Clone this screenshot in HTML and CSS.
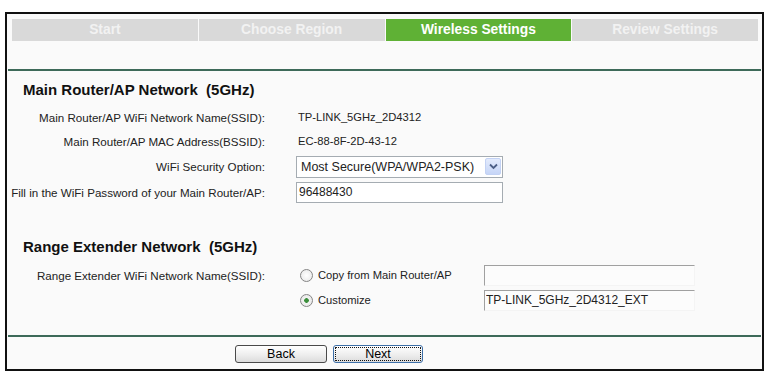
FILE: index.html
```html
<!DOCTYPE html>
<html lang="en">
<head>
    <meta charset="UTF-8">
    <title>Quick Setup - Wireless Settings</title>
    <link rel="stylesheet" href="styles.css">
</head>
<body>
    <div class="frame">
        <div class="tabs">
            <div class="tab">Start</div>
            <div class="tab">Choose Region</div>
            <div class="tab active">Wireless Settings</div>
            <div class="tab">Review Settings</div>
        </div>
        <div class="rule rule-top"></div>

        <h2 class="section-title">Main Router/AP Network&nbsp; (5GHz)</h2>
        <div class="row">
            <span class="label">Main Router/AP WiFi Network Name(SSID):</span>
            <span class="value">TP-LINK_5GHz_2D4312</span>
        </div>
        <div class="row">
            <span class="label">Main Router/AP MAC Address(BSSID):</span>
            <span class="value">EC-88-8F-2D-43-12</span>
        </div>
        <div class="row row-select">
            <span class="label">WiFi Security Option:</span>
            <div class="select">
                <span>Most Secure(WPA/WPA2-PSK)</span>
                <span class="select-arrow">
                    <svg width="9" height="7" viewBox="0 0 9 7"><path d="M1 1.5 L4.5 5 L8 1.5" fill="none" stroke="#4c5f86" stroke-width="1.8"/></svg>
                </span>
            </div>
        </div>
        <div class="row">
            <label class="label" for="password">Fill in the WiFi Password of your Main Router/AP:</label>
            <input class="text-input" type="text" id="password" value="96488430">
        </div>

        <h2 class="section-title section-second">Range Extender Network&nbsp; (5GHz)</h2>
        <div class="row row-ext">
            <span class="label">Range Extender WiFi Network Name(SSID):</span>
            <div class="choice">
                <label class="radio-label"><input type="radio" name="ssid" class="radio"> Copy from Main Router/AP</label>
                <input class="text-input inset" type="text" value="">
            </div>
        </div>
        <div class="row">
            <span class="label"></span>
            <div class="choice">
                <label class="radio-label"><input type="radio" name="ssid" class="radio" checked> Customize</label>
                <input class="text-input inset" type="text" value="TP-LINK_5GHz_2D4312_EXT">
            </div>
        </div>

        <div class="rule rule-bottom"></div>
        <div class="buttons">
            <button class="btn btn-back">Back</button>
            <button class="btn btn-next">Next</button>
        </div>
    </div>
</body>
</html>
```

FILE: styles.css
```css
body {
    margin: 0;
    background-color: #fff;
    font-family: "Liberation Sans", Arial, sans-serif;
    color: #222;
}
.frame {
    margin: 12px 0 0 5px;
    width: 755px;
    border: 2px solid #111;
    background-color: #fafafa;
}
.tabs {
    display: grid;
    grid-template-columns: repeat(4, 1fr);
    gap: 1px;
    padding: 5px 4px 0 5px;
}
.tab {
    height: 22px;
    line-height: 22px;
    text-align: center;
    background-color: #d9d9d9;
    color: #f2f2f2;
    font-weight: bold;
    font-size: 13.8px;
}
.tab.active {
    background-color: #5fb135;
    color: #fff;
}
.rule {
    height: 2px;
    margin: 0 1px;
    background-color: #3d6a59;
}
.rule-top {
    margin-top: 28px;
}
.rule-bottom {
    margin-top: 23px;
}
.section-title {
    margin: 9px 0 5px 16px;
    font-size: 15px;
    line-height: 20px;
    font-weight: bold;
    color: #111;
}
.section-second {
    margin-top: 33px;
}
.row {
    display: grid;
    grid-template-columns: 258px 1fr;
    column-gap: 31px;
    align-items: center;
    height: 24px;
    font-size: 11.6px;
}
.row-select {
    height: 27px;
}
.row-ext {
    height: 26px;
}
.label {
    text-align: right;
}
.value {
    padding-left: 2px;
    font-size: 11.2px;
}
.select {
    box-sizing: border-box;
    width: 207px;
    height: 22px;
    display: flex;
    align-items: center;
    justify-content: space-between;
    padding: 0 1px 0 4px;
    border: 1px solid #a5acb2;
    background-color: #fff;
    font-size: 12.5px;
    color: #222;
}
.select-arrow {
    width: 16px;
    height: 17px;
    display: flex;
    align-items: center;
    justify-content: center;
    box-sizing: border-box;
    border: 1px solid #c3d2f4;
    border-radius: 2px;
    background: linear-gradient(#e3ebfc, #c6d5f7);
}
.text-input {
    box-sizing: border-box;
    width: 207px;
    height: 21px;
    padding: 0 2px;
    border: 1px solid #a5acb2;
    background-color: #fff;
    font-family: "Liberation Sans", Arial, sans-serif;
    font-size: 12px;
    color: #222;
    outline: none;
}
.text-input.inset {
    width: 211px;
    padding: 0 1px;
    border-color: #a0a0a0 #f4f4f4 #f4f4f4 #a0a0a0;
    background-color: #fcfcfc;
}
.choice {
    display: grid;
    grid-template-columns: 188px 1fr;
    align-items: center;
}
.radio-label {
    display: flex;
    align-items: center;
    gap: 5px;
    padding-left: 4px;
    font-size: 11.2px;
}
.radio {
    appearance: none;
    margin: 0;
    width: 13px;
    height: 13px;
    border: 1px solid #858585;
    border-radius: 50%;
    background: radial-gradient(circle, #fff 0, #e6e6e6 100%);
}
.radio:checked {
    background: radial-gradient(circle, #3b8e3b 0, #3b8e3b 2px, #f2f2f2 2.6px, #e4e4e4 100%);
}
.buttons {
    display: flex;
    gap: 6px;
    padding: 8px 0 6px 228px;
}
.btn {
    height: 18px;
    padding: 0;
    border: 1px solid #4a4a4a;
    border-radius: 3px;
    background: linear-gradient(#ffffff, #ececec 60%, #dcdcdc);
    font-family: "Liberation Sans", Arial, sans-serif;
    font-size: 12.5px;
    color: #000;
}
.btn-back {
    width: 92px;
}
.btn-next {
    width: 90px;
    border-color: #3d6fa8;
    outline: 1px dotted #111;
    outline-offset: -3px;
}
```
